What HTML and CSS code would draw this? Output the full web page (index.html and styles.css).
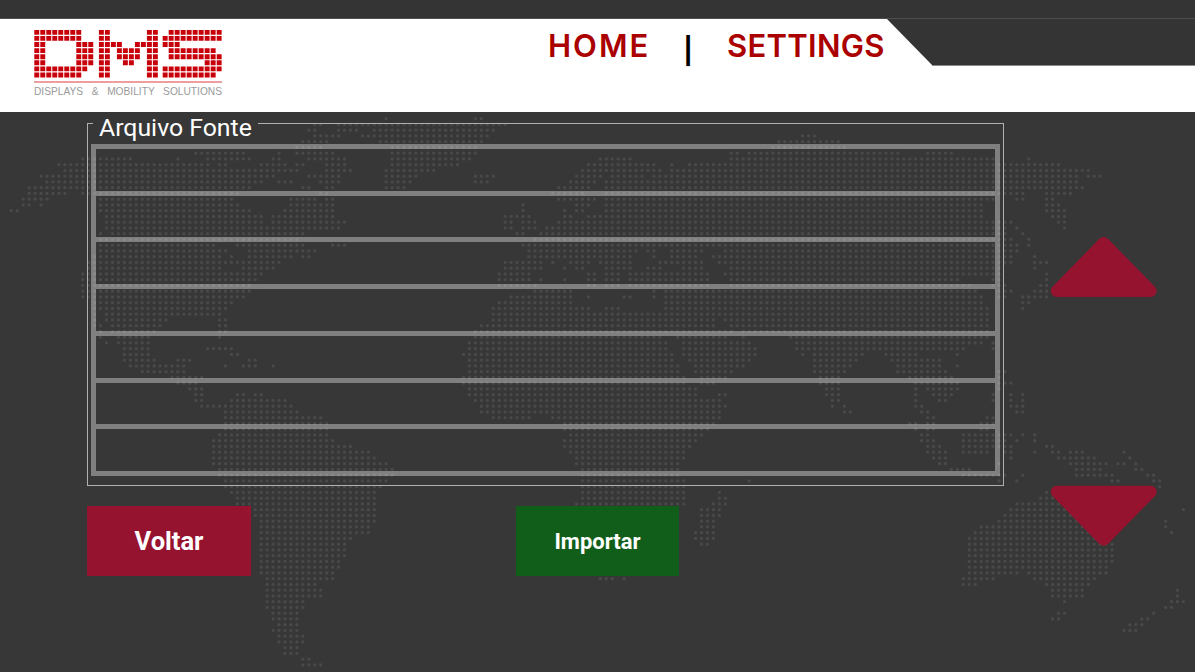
FILE: index.html
```html
<!DOCTYPE html>
<html lang="pt">
<head>
<meta charset="utf-8">
<title>DMS</title>
<link rel="stylesheet" href="styles.css">
</head>
<body>
<svg class="world" viewBox="0 0 1195 672" aria-hidden="true">
<g transform="translate(11.3 118.7) scale(5.95 5.75)">
<path class="dots" d="M63 0h.1M78 0H79.1
M51 1H52.1M55 1H83.1
M50 2H51.1M55 2H58.1M61 2H81.1
M51 3H55.1M59 3H80.1M133 3H135.1
M49 4H53.1M62 4H79.1M129 4H139.1
M48 5H52.1M64 5H78.1M128 5H140.1
M31 6H39.1M45 6h.1M48 6H54.1M64 6H78.1M121 6H122.1M124 6H149.1M154 6H158.1
M12 7H20.1M28 7h.1M33 7H40.1M44 7H45.1M50 7H56.1M64 7H77.1M99 7H104.1M121 7H165.1M171 7h.1
M8 8H33.1M35 8H36.1M42 8H46.1M48 8H49.1M53 8H56.1M64 8H75.1M97 8H108.1M111 8h.1M114 8H176.1
M9 9H48.1M53 9H57.1M63 9H71.1M96 9H109.1M111 9H181.1
M5 10H44.1M50 10H55.1M63 10H68.1M78 10H81.1M95 10H99.1M101 10H106.1M108 10H179.1M181 10H183.1
M6 11H42.1M45 11H47.1M52 11H55.1M63 11H67.1M78 11H80.1M94 11H98.1M100 11H179.1
M3 12H40.1M49 12H50.1M53 12H54.1M63 12H66.1M92 12H97.1M100 12H180.1
M3 13H9.1M12 13H38.1M52 13H53.1M91 13H96.1M100 13H170.1M174 13H178.1
M2 14H6.1M15 14H37.1M47 14H51.1M53 14H54.1M92 14H98.1M100 14H165.1M169 14H170.1M174 14H175.1
M2 15H3.1M5 15h.1M15 15H38.1M47 15H54.1M86 15h.1M95 15H97.1M100 15H163.1M174 15H176.1
M0 16H1.1M15 16H40.1M46 16H54.1M86 16h.1M93 16h.1M95 16H96.1M100 16H163.1M174 16H177.1
M16 17H42.1M44 17H54.1M83 17H87.1M93 17H94.1M97 17H163.1M175 17H177.1
M16 18H42.1M44 18H56.1M83 18H84.1M86 18H88.1M92 18H168.1M176 18H177.1
M16 19H55.1M83 19H84.1M86 19H88.1M90 19H167.1M169 19h.1M177 19h.1
M15 20h.1M17 20H49.1M85 20H86.1M89 20H167.1M170 20h.1
M15 21H48.1M88 21H168.1M171 21h.1
M15 22H34.1M38 22H49.1M54 22H56.1M86 22H169.1M171 22h.1
M15 23H36.1M40 23H51.1M87 23H105.1M107 23H108.1M111 23H116.1M120 23H169.1
M14 24H35.1M37 24h.1M40 24H47.1M49 24H50.1M87 24H104.1M108 24h.1M111 24H115.1M118 24h.1M119 24H168.1M172 24h.1
M13 25H45.1M83 25H89.1M91 25h.1M94 25H97.1M99 25H104.1M109 25H112.1M113 25H116.1M119 25H168.1M172 25H174.1
M13 26H35.1M39 26H44.1M83 26H89.1M93 26h.1M95 26H96.1M100 26H104.1M107 26H109.1M113 26H116.1M121 26H166.1M172 26h.1
M12 27H42.1M82 27H87.1M97 27H98.1M100 27H102.1M104 27H117.1M120 27H166.1M174 27h.1
M12 28H41.1M82 28H87.1M89 28h.1M93 28h.1M97 28H98.1M100 28H102.1M104 28H117.1M121 28H159.1M165 28H166.1M174 28h.1
M12 29H40.1M82 29H88.1M97 29H98.1M100 29H102.1M104 29H117.1M121 29H161.1M165 29H167.1M173 29H174.1
M12 30H40.1M88 30H94.1M108 30h.1M110 30H162.1M166 30H168.1M172 30H174.1
M12 31H39.1M84 31H94.1M97 31h.1M103 31H104.1M108 31h.1M110 31H163.1M166 31H167.1M170 31H174.1
M14 32H37.1M82 32H94.1M110 32H163.1M170 32H171.1
M14 33H36.1M81 33H97.1M100 33H102.1M110 33H164.1M170 33h.1
M14 34h.1M16 34H35.1M81 34H109.1M110 34H119.1M120 34H164.1
M14 35h.1M16 35H26.1M35 35H36.1M81 35H118.1M120 35H164.1
M14 36H15.1M17 36H25.1M35 36H36.1M79 36H118.1M121 36H164.1
M15 37h.1M17 37H24.1M35 37H36.1M78 37H121.1M123 37h.1M124 37H164.1
M15 38h.1M18 38H23.1M35 38h.1M78 38H109.1M112 38H120.1M123 38h.1M131 38H164.1
M16 39h.1M18 39H23.1M77 39H110.1M113 39H124.1M132 39H163.1M165 39h.1
M19 40H23.1M33 40H37.1M77 40H110.1M113 40H125.1M132 40H160.1M165 40h.1
M19 41H23.1M37 41H38.1M76 41H111.1M113 41H125.1M133 41h.1M135 41H143.1M147 41H152.1M159 41h.1
M19 42H24.1M28 42H30.1M40 42H41.1M77 42H111.1M114 42H124.1M135 42H142.1M148 42H156.1
M20 43H29.1M36 43h.1M39 43H41.1M44 43h.1M77 43H112.1M115 43H123.1M135 43H141.1M149 43H156.1M159 43h.1
M22 44H29.1M77 44H112.1M115 44H121.1M135 44H140.1M149 44H157.1M166 44H167.1
M27 45H32.1M76 45H113.1M116 45H120.1M136 45H139.1M151 45H158.1M166 45h.1
M28 46H31.1M76 46H113.1M116 46H118.1M136 46H139.1M152 46H159.1M166 46H168.1
M30 47H32.1M77 47H115.1M137 47H139.1M152 47h.1M154 47H159.1M166 47h.1
M31 48H32.1M38 48H39.1M41 48H42.1M77 48H115.1M119 48H120.1M137 48H139.1M152 48h.1M155 48H158.1M165 48h.1M168 48h.1M170 48h.1
M31 49H32.1M37 49H46.1M78 49H115.1M116 49H119.1M138 49H139.1M152 49h.1M156 49H157.1M165 49h.1M168 49h.1M170 49h.1
M32 50H35.1M36 50H47.1M79 50H120.1M138 50h.1M140 50h.1M152 50H153.1M168 50H170.1
M36 51H48.1M79 51H119.1M140 51H141.1M153 51H154.1M169 51H170.1
M36 52H52.1M81 52H87.1M91 52H119.1M154 52H155.1M164 52H165.1
M36 53H53.1M93 53H118.1M151 53H152.1M154 53H155.1M163 53H165.1
M36 54H53.1M93 54H117.1M152 54h.1M154 54H155.1M163 54H164.1
M35 55H53.1M94 55H116.1M153 55H154.1M160 55H168.1M170 55h.1M172 55h.1
M34 56H54.1M93 56H115.1M153 56H155.1M160 56H167.1M169 56h.1M172 56h.1
M34 57H54.1M55 57H57.1M93 57H114.1M154 57H156.1M160 57H168.1M174 57H175.1
M34 58H60.1M94 58H113.1M154 58H157.1M160 58H164.1M167 58H168.1M172 58h.1M175 58H176.1M178 58H180.1M187 58h.1
M34 59H61.1M95 59H113.1M155 59H157.1M168 59h.1M176 59H182.1M188 59h.1
M34 60H63.1M95 60H112.1M156 60H157.1M166 60h.1M178 60H184.1M186 60H187.1M189 60h.1
M35 61H64.1M96 61H112.1M158 61H161.1M179 61H183.1M189 61H190.1
M35 62H64.1M96 62H112.1M160 62H167.1M170 62h.1M179 62H183.1M184 62H185.1M191 62H192.1
M36 63H63.1M96 63H113.1M124 63h.1M166 63h.1M169 63h.1M185 63H186.1M192 63H193.1
M36 64H62.1M96 64H113.1M193 64h.1
M37 65H61.1M96 65H113.1M119 65h.1M174 65h.1
M38 66H61.1M96 66H113.1M119 66H120.1M173 66H175.1
M38 67H61.1M95 67H113.1M118 67H120.1M169 67H176.1
M41 68H61.1M116 68H119.1M168 68H177.1M197 68h.1
M41 69H61.1M116 69H119.1M167 69H178.1
M42 70H61.1M116 70H118.1M166 70H179.1M194 70h.1
M42 71H60.1M116 71H118.1M163 71H180.1M194 71h.1
M42 72H60.1M115 72H118.1M162 72H181.1M195 72h.1
M42 73H57.1M115 73H118.1M161 73H182.1
M42 74H56.1M116 74H117.1M161 74H185.1
M42 75H56.1M161 75H185.1
M42 76H56.1M161 76H185.1
M42 77H55.1M161 77H185.1
M42 78H55.1M161 78H184.1
M42 79H54.1M161 79H169.1M171 79H184.1
M43 80H54.1M99 80H101.1M103 80h.1M160 80H165.1M172 80H182.1
M43 81H51.1M160 81H162.1M174 81H181.1
M43 82H52.1M175 82H180.1M196 82h.1
M43 83H52.1M175 83H180.1M196 83h.1
M43 84H49.1M177 84h.1M195 84H197.1
M43 85H49.1M194 85H195.1
M44 86H48.1M176 86H177.1M192 86h.1
M44 87H48.1M175 87H176.1M190 87H191.1
M45 88H48.1M188 88H190.1
M44 89H48.1M187 89H189.1
M45 90H49.1
M45 91H49.1
M46 92H48.1
M46 93H48.1
M49 94H50.1
M49 95H52.1"/>
</g>
</svg>

<div class="topbar"></div>
<header class="header">
  <div class="brand">
    <svg class="logo-mark" viewBox="0 0 189 53" aria-label="DMS">
      <g transform="translate(.3 2.3) scale(6 6.1)">
        <path class="logo-cells" d="M0 0h8M0 1h8M0 2h2M7 2h3M0 3h2M7 3h3M0 4h2M7 4h3M0 5h2M7 5h3M0 6h9M0 7h8
        M10.77 0h2M18.77 0h2M10.77 1h2M18.77 1h2M10.77 2h4M16.77 2h4M10.77 3h2M13.77 3h4M18.77 3h2M10.77 4h2M13.77 4h4M18.77 4h2M10.77 5h2M14.77 5h2M18.77 5h2M10.77 6h2M18.77 6h2M10.77 7h2M18.77 7h2
        M22.4 0h9M21.4 1h10M21.4 2h3M22.4 3h8M22.4 4h9M28.4 5h3M21.4 6h10M21.4 7h9"/>
      </g>
      <rect class="logo-rule" x="0" y="51.5" width="188" height="1"/>
    </svg>
    <div class="logo-text">DISPLAYS &amp; MOBILITY SOLUTIONS</div>
  </div>
  <nav class="nav">
    <a class="nav-link nav-home">HOME</a>
    <span class="nav-sep">|</span>
    <a class="nav-link nav-settings">SETTINGS</a>
  </nav>
  <div class="notch"></div>
</header>

<main class="main">
  <div class="content">
    <fieldset class="box">
      <legend class="box-title">Arquivo Fonte</legend>
      <div class="list">
        <div class="row"></div>
        <div class="row"></div>
        <div class="row"></div>
        <div class="row"></div>
        <div class="row"></div>
        <div class="row"></div>
        <div class="row"></div>
      </div>
    </fieldset>
    <div class="actions">
      <button class="btn btn-back">Voltar</button>
      <button class="btn btn-import">Importar</button>
    </div>
  </div>
  <div class="arrows">
    <svg class="arrow" viewBox="0 0 108 61"><polygon class="arrow-shape" points="54.7,7 101.7,55 7.7,55"/></svg>
    <svg class="arrow" viewBox="0 0 108 61"><polygon class="arrow-shape" points="7.7,6.7 101.7,6.7 54.7,54.7"/></svg>
  </div>
</main>
</body>
</html>
```
FILE: styles.css
```css
html, body {
  margin: 0;
  padding: 0;
}
body {
  width: 1195px;
  height: 672px;
  overflow: hidden;
  background: #373737;
  font-family: "Roboto", "Liberation Sans", sans-serif;
}
.world {
  position: absolute;
  left: 0;
  top: 0;
  width: 1195px;
  height: 672px;
  z-index: -1;
}
.dots {
  fill: none;
  stroke: #494949;
  stroke-width: .56;
  stroke-linecap: round;
  stroke-dasharray: .001 .999;
}
.topbar {
  height: 18px;
  background: #343434;
  border-bottom: 1px solid #4e4e4e;
}
.header {
  position: relative;
  height: 93px;
  background: #fff;
  display: flex;
}
.brand {
  width: 188px;
  margin-left: 34px;
  padding-top: 11px;
}
.logo-mark {
  display: block;
  width: 189px;
  height: 53px;
}
.logo-cells {
  fill: none;
  stroke: #c8000a;
  stroke-width: .8;
  stroke-dasharray: .82 .18;
}
.logo-rule {
  fill: #dc4040;
}
.logo-text {
  margin-top: 3px;
  font-family: "Liberation Sans", Arial, sans-serif;
  font-size: 10.2px;
  line-height: 12px;
  color: #9a9a9a;
  white-space: nowrap;
  word-spacing: 5.8px;
}
.nav {
  display: flex;
  align-items: flex-start;
  margin-left: 326px;
  padding-top: 9px;
}
.nav-link {
  font-family: "Inter", "Liberation Sans", sans-serif;
  font-size: 31px;
  font-weight: 600;
  line-height: 36px;
  color: #aa0000;
}
.nav-home {
  letter-spacing: 2px;
}
.nav-settings {
  letter-spacing: .3px;
}
.nav-sep {
  margin: 0 34px 0 33px;
  padding-top: 5px;
  font-family: "Inter", "Liberation Sans", sans-serif;
  font-size: 26px;
  font-weight: 700;
  line-height: 36px;
  color: #000;
}
.notch {
  position: absolute;
  left: 887px;
  right: 0;
  top: 0;
  height: 46px;
  background: #343434;
  border-bottom: 1px solid #8a8a8a;
  clip-path: polygon(0 0, 100% 0, 100% 100%, 46px 100%);
}
.main {
  display: flex;
  padding-left: 87px;
}
.content {
  width: 917px;
}
.box {
  box-sizing: border-box;
  width: 917px;
  height: 379px;
  margin: -5px 0 0;
  padding: 4px 3px 0;
  border: 1px solid #b0b0b0;
  min-width: 0;
}
.box-title {
  margin-left: 2px;
  padding: 9px 6px 0;
  font-size: 24.8px;
  line-height: 24px;
  color: #fff;
}
.list {
  box-sizing: border-box;
  height: 332px;
  width: 909px;
  display: flex;
  flex-direction: column;
  border: 5px solid rgba(255, 255, 255, .36);
}
.row {
  flex: 1;
  border-top: 5px solid rgba(255, 255, 255, .36);
}
.row:first-child {
  border-top: 0;
}
.actions {
  display: flex;
  gap: 265px;
  margin-top: 20px;
}
.btn {
  width: 164px;
  height: 70px;
  border: 0;
  padding: 0;
  font-family: "Roboto", sans-serif;
  font-weight: 700;
  color: #fff;
}
.btn-back {
  background: #961330;
  font-size: 25.5px;
}
.btn-import {
  width: 163px;
  background: #115e1a;
  font-size: 22px;
}
.arrows {
  display: flex;
  flex-direction: column;
  gap: 188px;
  margin-left: 45px;
  padding-top: 124px;
}
.arrow {
  display: block;
  width: 108px;
  height: 61px;
}
.arrow-shape {
  fill: #961330;
  stroke: #961330;
  stroke-width: 12;
  stroke-linejoin: round;
}
```
